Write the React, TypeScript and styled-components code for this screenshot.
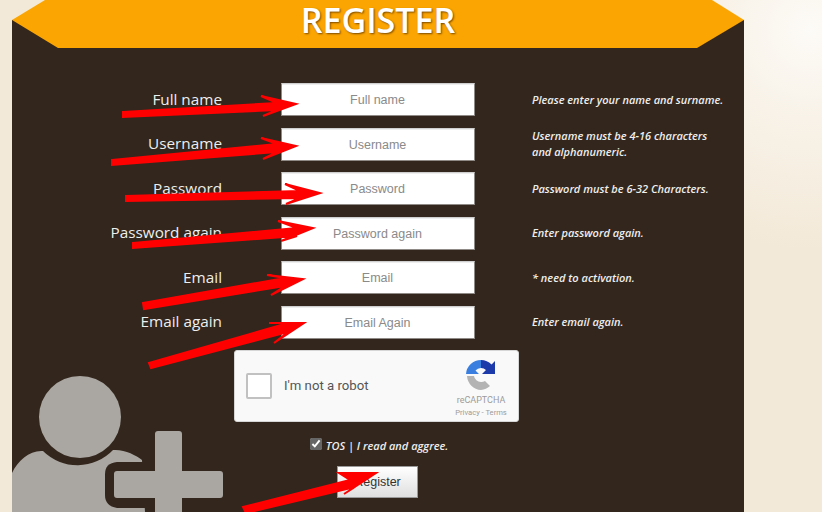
import React from "react";
import { createGlobalStyle, styled } from "styled-components";

const Global = createGlobalStyle`
  html, body { margin: 0; padding: 0; }
  body { width: 822px; height: 512px; overflow: hidden; font-family: "Open Sans", sans-serif; }
`;

const Page = styled.div`
  position: relative;
  width: 822px;
  height: 512px;
  box-sizing: border-box;
  padding: 20px 78px 0 12px;
  overflow: hidden;
  background: radial-gradient(circle at 810px 30px, #fdfbf7 0, #f8f2e8 90px, #f3e9d8 220px);
`;

const Panel = styled.main`
  position: relative;
  height: 492px;
  box-sizing: border-box;
  padding-top: 63px;
  overflow: hidden;
  background: #33261c;
`;

const Banner = styled.header`
  position: absolute;
  left: 12px;
  top: 0;
  z-index: 1;
  width: 732px;
  height: 48px;
  background: #fba502;
  clip-path: polygon(33px 0, 700px 0, 732px 20px, 685px 48px, 46px 48px, 0 20px);
  display: flex;
  justify-content: center;
`;

const Title = styled.h1`
  margin: 0;
  font: 600 34px/40px "Open Sans", sans-serif;
  color: #fff;
  text-shadow: 1px 1px 2px #7a4a00;
`;

const Rows = styled.div`
  display: flex;
  flex-direction: column;
  gap: 11.5px;
`;

const Row = styled.div`
  display: grid;
  grid-template-columns: 210px 194px 1fr;
  column-gap: 59px;
  height: 33px;
  align-items: center;
`;

const Label = styled.label`
  margin-top: -2px;
  text-align: right;
  font: 400 15.3px/20px "Open Sans", sans-serif;
  color: #eee;
`;

const Field = styled.div`
  box-sizing: border-box;
  height: 33px;
  padding-right: 1px;
  background: #fff;
  border: 1px solid #8f8a86;
  border-top-color: #cfcfcf;
  box-shadow: inset 0 1px #eee;
  color: #8a8a8a;
  font: 400 12.5px/32px "Liberation Sans", sans-serif;
  text-align: center;
`;

const Hint = styled.div`
  width: 192px;
  margin-left: -2px;
  font: italic 600 11px/16px "Open Sans", sans-serif;
  color: #eee;
`;

const Bottom = styled.div`
  position: relative;
  z-index: 1;
  display: flex;
  flex-direction: column;
  align-items: center;
  padding-top: 11px;
`;

const Captcha = styled.div`
  box-sizing: border-box;
  width: 285px;
  height: 72px;
  margin-left: -3px;
  display: flex;
  align-items: center;
  padding: 0 10px 0 11px;
  background: #f9f9f9;
  border: 1px solid #d6d6d6;
  border-radius: 3px;
`;

const CaptchaBox = styled.span`
  box-sizing: border-box;
  width: 26px;
  height: 26px;
  background: #fff;
  border: 2px solid #c1c1c1;
  border-radius: 2px;
`;

const CaptchaText = styled.span`
  flex: 1;
  margin-left: 12px;
  font: 400 13.2px/16px Roboto, sans-serif;
  color: #555;
`;

const CaptchaBrand = styled.div`
  display: flex;
  flex-direction: column;
  align-items: center;
  width: 54px;
  margin-top: 8px;
  font-family: Roboto, sans-serif;
  color: #9b9b9b;
`;

const BrandName = styled.span`
  margin-top: 4px;
  font-size: 9px;
  line-height: 12px;
`;

const BrandLinks = styled.span`
  margin-top: 1px;
  font-size: 7.6px;
  line-height: 12px;
  white-space: nowrap;
`;

const Tos = styled.label`
  display: flex;
  align-items: center;
  gap: 4px;
  margin: 14px 0 0 2px;
  height: 20px;
  font: italic 600 11px/20px "Open Sans", sans-serif;
  color: #eee;
`;

const TosCheck = styled.input`
  width: 12px;
  height: 12px;
  margin: -4px 0 0 0;
  accent-color: #666;
`;

const SubmitButton = styled.button`
  box-sizing: border-box;
  width: 81px;
  height: 32px;
  margin: 10px 0 0 -1px;
  padding: 1px 0 0;
  background: linear-gradient(#fff, #dfdfdf);
  border: 1px solid #9a9a9a;
  color: #333;
  font: 400 12.5px/29px "Liberation Sans", sans-serif;
`;

const PersonIcon = styled.svg`
  position: absolute;
  left: 0;
  bottom: 0;
  width: 224px;
  height: 142px;
`;

const ArrowLayer = styled.svg`
  position: absolute;
  left: 0;
  top: 0;
  z-index: 2;
  width: 822px;
  height: 512px;
  pointer-events: none;
`;

const rows = [
  { label: "Full name", placeholder: "Full name", hint: "Please enter your name and surname." },
  { label: "Username", placeholder: "Username", hint: "Username must be 4-16 characters and alphanumeric." },
  { label: "Password", placeholder: "Password", hint: "Password must be 6-32 Characters." },
  { label: "Password again", placeholder: "Password again", hint: "Enter password again." },
  { label: "Email", placeholder: "Email", hint: "* need to activation." },
  { label: "Email again", placeholder: "Email Again", hint: "Enter email again." },
];

// hand drawn red arrows, in page pixels
const arrows = [
  "123,112 277,103 261,96 296,104 263,116 277,110 123,117",
  "112,160 277,144 261,138 296,146 263,159 277,152 112,165",
  "126,196 300,191 285,184 320,193 286,204 300,198 126,201",
  "133,243 297,228 278,221 313,228 281,241 297,236 133,248",
  "143,303 285,278 267,275 303,279 271,295 285,286 144,309",
  "149,363 288,323 269,323 304,323 274,343 288,332 151,368",
  "243,507 350,480 339,473 376,473 344,494 355,487 246,513",
];

export default function App() {
  return (
    <Page>
      <Global />
      <Banner>
        <Title>REGISTER</Title>
      </Banner>
      <Panel>
        <PersonIcon viewBox="0 0 224 142">
          <circle cx="68" cy="47" r="41" fill="#aaa6a2" />
          <path
            d="M0 103 C6 90 18 80 31 81 A49 49 0 0 0 101 80 C112 79 124 85 130 90 L133 142 L0 142 Z"
            fill="#aaa6a2"
          />
          <path d="M105 92 H143 V138 H105 Q93 136 93 125 V104 Q93 93 105 92 Z" fill="#33261c" />
          <path
            d="M146 61 H167 Q170 61 170 64 V101 H208 Q211 101 211 104 V125 Q211 128 208 128 H170 V142 H143 V128 H105 Q102 128 102 125 V104 Q102 101 105 101 H143 V64 Q143 61 146 61 Z"
            fill="#aaa6a2"
          />
        </PersonIcon>
        <Rows>
          {rows.map((row) => (
            <Row key={row.label}>
              <Label>{row.label}</Label>
              <Field>{row.placeholder}</Field>
              <Hint>{row.hint}</Hint>
            </Row>
          ))}
        </Rows>
        <Bottom>
          <Captcha>
            <CaptchaBox />
            <CaptchaText>I'm not a robot</CaptchaText>
            <CaptchaBrand>
              <svg width="30" height="30" viewBox="0 0 30 30">
                <path d="M15 0 L15 8 A7 7 0 0 0 9.5 10.5 L13 14 L0 14 A15 15 0 0 1 15 0 Z" fill="#3a7fe0" />
                <path d="M15 0 A15 15 0 0 1 25.5 4.5 L29 1 L29 14 L16 14 L20 10 A7 7 0 0 0 15 8 Z" fill="#1c3aa9" />
                <path d="M1 16 L8 16 A7 7 0 0 0 15 22 A7 7 0 0 0 19 21 L24 26 A15 15 0 0 1 15 30 A15 15 0 0 1 1 16 Z" fill="#b3b3b3" />
              </svg>
              <BrandName>reCAPTCHA</BrandName>
              <BrandLinks>Privacy - Terms</BrandLinks>
            </CaptchaBrand>
          </Captcha>
          <Tos>
            <TosCheck type="checkbox" defaultChecked />
            TOS | I read and aggree.
          </Tos>
          <SubmitButton type="button">Register</SubmitButton>
        </Bottom>
      </Panel>
      <ArrowLayer viewBox="0 0 822 512">
        {arrows.map((points) => (
          <polygon key={points} points={points} fill="#ff0000" stroke="#ff0000" strokeWidth="2" />
        ))}
      </ArrowLayer>
    </Page>
  );
}
